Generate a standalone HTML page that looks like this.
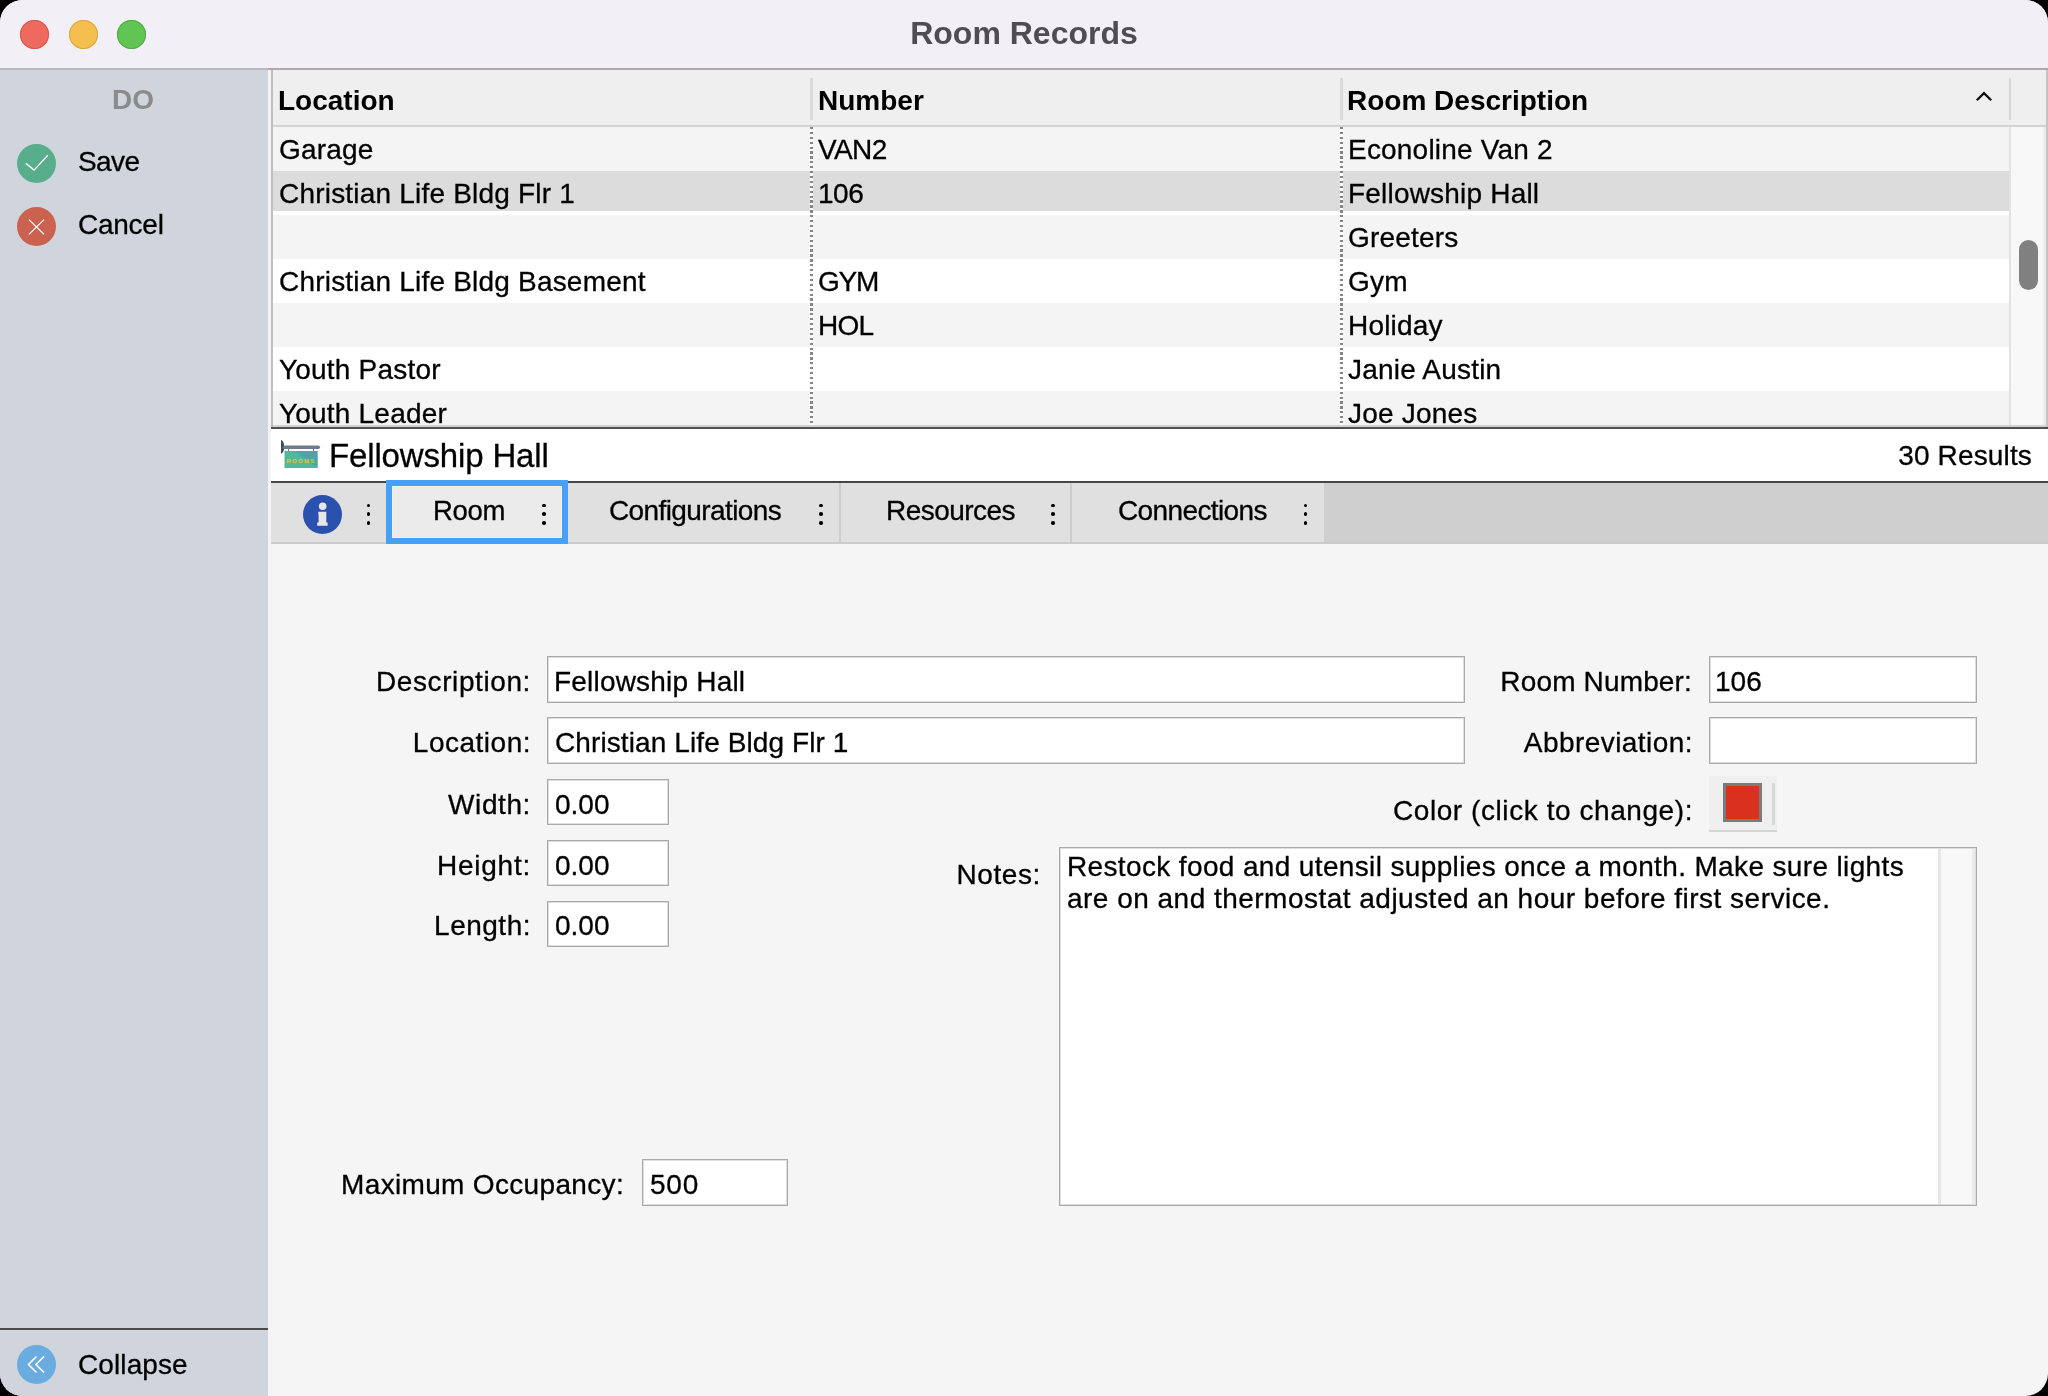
<!DOCTYPE html>
<html><head><meta charset="utf-8"><title>Room Records</title>
<style>
html,body{margin:0;padding:0;background:#000;}
body{width:2048px;height:1396px;overflow:hidden;position:relative;font-family:"Liberation Sans",sans-serif;}
#win{position:absolute;left:0;top:0;width:2048px;height:1396px;border-radius:22.5px;overflow:hidden;background:#f5f5f5;}
.t{position:absolute;white-space:pre;color:#000;will-change:transform;-webkit-text-stroke:0.3px currentColor;}
.b{-webkit-text-stroke:0;}
.r{position:absolute;}
</style></head><body><div id="win">

<div class="r" style="left:0px;top:0px;width:2048px;height:68px;background:#f2f0f6;"></div>
<div class="r" style="left:0px;top:68px;width:268px;height:2px;background:#b4b9c2;"></div>
<div class="r" style="left:268px;top:68px;width:1780px;height:2px;background:#aaaaaa;"></div>
<div class="r" style="left:19.5px;top:19.5px;width:29px;height:29px;border-radius:50%;background:#ee6a5e;box-shadow:inset 0 0 0 1px #d6574c;"></div>
<div class="r" style="left:68.5px;top:19.5px;width:29px;height:29px;border-radius:50%;background:#f4bf4f;box-shadow:inset 0 0 0 1px #dba53c;"></div>
<div class="r" style="left:117.1px;top:19.5px;width:29px;height:29px;border-radius:50%;background:#61c554;box-shadow:inset 0 0 0 1px #50a844;"></div>
<div class="t b" style="left:524px;width:1000px;text-align:center;top:16.91px;font-size:32px;line-height:32px;font-weight:700;color:#4e4e52;">Room Records</div>
<div class="r" style="left:0px;top:70px;width:268px;height:1326px;background:#cfd4dd;"></div>
<div class="r" style="left:268px;top:70px;width:3px;height:1326px;background:#f4f4f4;"></div>
<div class="t b" style="left:-367px;width:1000px;text-align:center;top:85.80px;font-size:28px;line-height:28px;font-weight:700;color:#8b8b8b;">DO</div>
<svg class="r" style="left:17px;top:144px" width="39" height="39" viewBox="0 0 39 39"><circle cx="19.5" cy="19.5" r="19.5" fill="#58ad8b"/><path d="M8.8 19.4 L17.1 26.1 L30.8 11.3" fill="none" stroke="#fff" stroke-width="1.35"/></svg>
<div class="t" style="left:77.8px;top:147.60px;font-size:28px;line-height:28px;letter-spacing:-0.6px;">Save</div>
<svg class="r" style="left:17px;top:207px" width="39" height="39" viewBox="0 0 39 39"><circle cx="19.5" cy="19.5" r="19.5" fill="#cb6250"/><path d="M11.9 12.6 L27.1 27.4 M27.1 12.6 L11.9 27.4" fill="none" stroke="#fff" stroke-width="1.3"/></svg>
<div class="t" style="left:78.2px;top:210.80px;font-size:28px;line-height:28px;letter-spacing:-0.25px;">Cancel</div>
<div class="r" style="left:0px;top:1328px;width:268px;height:2px;background:#4a4a4a;"></div>
<svg class="r" style="left:17px;top:1345px" width="39" height="39" viewBox="0 0 39 39"><circle cx="19.5" cy="19.5" r="19.5" fill="#6aacdf"/><path d="M19.5 11.5 L11.5 19.5 L19.5 27.5 M27 11.5 L19 19.5 L27 27.5" fill="none" stroke="#fff" stroke-width="1.6"/></svg>
<div class="t" style="left:78px;top:1350.80px;font-size:28px;line-height:28px;letter-spacing:0.1px;">Collapse</div>
<div class="r" style="left:271px;top:70px;width:1777px;height:359px;background:#ffffff;"></div>
<div class="r" style="left:271px;top:70px;width:2px;height:359px;background:#c0c0c0;"></div>
<div class="r" style="left:273px;top:70px;width:1772.5px;height:55px;background:#efefef;"></div>
<div class="r" style="left:273px;top:125px;width:1772.5px;height:2px;background:#d3d3d3;"></div>
<div class="r" style="left:2045.5px;top:70px;width:2.5px;height:359px;background:#c4c4c4;"></div>
<div class="r" style="left:810px;top:78px;width:3px;height:42px;background:#dadada;"></div>
<div class="r" style="left:1340px;top:78px;width:3px;height:42px;background:#dadada;"></div>
<div class="r" style="left:2009px;top:78px;width:2px;height:42px;background:#d6d6d6;"></div>
<div class="t b" style="left:278px;top:86.60px;font-size:28px;line-height:28px;font-weight:700;">Location</div>
<div class="t b" style="left:817.5px;top:86.60px;font-size:28px;line-height:28px;font-weight:700;">Number</div>
<div class="t b" style="left:1346.5px;top:86.60px;font-size:28px;line-height:28px;font-weight:700;">Room Description</div>
<svg class="r" style="left:1975px;top:90px" width="18" height="12" viewBox="0 0 18 12"><path d="M1.8 10.3 L9 3.2 L16.2 10.3" fill="none" stroke="#111" stroke-width="2.3"/></svg>
<div class="r" style="left:273px;top:127px;width:1736px;height:44px;background:#f3f4f3;"></div>
<div class="t" style="left:278.5px;top:136.00px;font-size:28px;line-height:28px;letter-spacing:0.2px;">Garage</div>
<div class="t" style="left:817.5px;top:136.00px;font-size:28px;line-height:28px;letter-spacing:-0.6px;">VAN2</div>
<div class="t" style="left:1347.5px;top:136.00px;font-size:28px;line-height:28px;letter-spacing:0.2px;">Econoline Van 2</div>
<div class="r" style="left:273px;top:171px;width:1736px;height:44px;background:#ffffff;"></div>
<div class="r" style="left:273px;top:171px;width:1736px;height:40px;background:#dcdcdc;"></div>
<div class="t" style="left:278.5px;top:180.00px;font-size:28px;line-height:28px;letter-spacing:0.2px;">Christian Life Bldg Flr 1</div>
<div class="t" style="left:817.5px;top:180.00px;font-size:28px;line-height:28px;letter-spacing:-0.5px;">106</div>
<div class="t" style="left:1347.5px;top:180.00px;font-size:28px;line-height:28px;letter-spacing:0.2px;">Fellowship Hall</div>
<div class="r" style="left:273px;top:215px;width:1736px;height:44px;background:#f3f4f3;"></div>
<div class="t" style="left:278.5px;top:224.00px;font-size:28px;line-height:28px;letter-spacing:0.2px;"></div>
<div class="t" style="left:817.5px;top:224.00px;font-size:28px;line-height:28px;"></div>
<div class="t" style="left:1347.5px;top:224.00px;font-size:28px;line-height:28px;letter-spacing:0.2px;">Greeters</div>
<div class="r" style="left:273px;top:259px;width:1736px;height:44px;background:#ffffff;"></div>
<div class="t" style="left:278.5px;top:268.00px;font-size:28px;line-height:28px;letter-spacing:0.2px;">Christian Life Bldg Basement</div>
<div class="t" style="left:817.5px;top:268.00px;font-size:28px;line-height:28px;letter-spacing:-1.2px;">GYM</div>
<div class="t" style="left:1347.5px;top:268.00px;font-size:28px;line-height:28px;letter-spacing:0.2px;">Gym</div>
<div class="r" style="left:273px;top:303px;width:1736px;height:44px;background:#f3f4f3;"></div>
<div class="t" style="left:278.5px;top:312.00px;font-size:28px;line-height:28px;letter-spacing:0.2px;"></div>
<div class="t" style="left:817.5px;top:312.00px;font-size:28px;line-height:28px;letter-spacing:-0.7px;">HOL</div>
<div class="t" style="left:1347.5px;top:312.00px;font-size:28px;line-height:28px;letter-spacing:0.2px;">Holiday</div>
<div class="r" style="left:273px;top:347px;width:1736px;height:44px;background:#ffffff;"></div>
<div class="t" style="left:278.5px;top:356.00px;font-size:28px;line-height:28px;letter-spacing:0.2px;">Youth Pastor</div>
<div class="t" style="left:817.5px;top:356.00px;font-size:28px;line-height:28px;"></div>
<div class="t" style="left:1347.5px;top:356.00px;font-size:28px;line-height:28px;letter-spacing:0.2px;">Janie Austin</div>
<div class="r" style="left:273px;top:391px;width:1736px;height:36px;background:#f3f4f3;"></div>
<div class="t" style="left:278.5px;top:400.00px;font-size:28px;line-height:28px;letter-spacing:0.2px;">Youth Leader</div>
<div class="t" style="left:817.5px;top:400.00px;font-size:28px;line-height:28px;"></div>
<div class="t" style="left:1347.5px;top:400.00px;font-size:28px;line-height:28px;letter-spacing:0.2px;">Joe Jones</div>
<div class="r" style="left:810px;top:127px;width:3px;height:298px;background:repeating-linear-gradient(#858585 0 2.2px,#ffffff 2.2px 4.9px);"></div>
<div class="r" style="left:1340px;top:127px;width:3px;height:298px;background:repeating-linear-gradient(#858585 0 2.2px,#ffffff 2.2px 4.9px);"></div>
<div class="r" style="left:2009px;top:127px;width:2px;height:300px;background:#e2e2e2;"></div>
<div class="r" style="left:2011px;top:127px;width:32px;height:300px;background:#f8f8f8;"></div>
<div class="r" style="left:2043px;top:127px;width:2.5px;height:300px;background:#ececec;"></div>
<div class="r" style="left:2019px;top:240px;width:19px;height:50px;border-radius:9.5px;background:#808080"></div>
<div class="r" style="left:273px;top:425px;width:1772.5px;height:2px;background:#d2d2d2;"></div>
<div class="r" style="left:271px;top:427px;width:1777px;height:2.3000000000000114px;background:#505050;"></div>
<div class="r" style="left:271px;top:429px;width:1777px;height:52px;background:#ffffff;"></div>
<svg class="r" style="left:280px;top:439px" width="41" height="31" viewBox="0 0 41 31">
<path d="M1 0.7 Q4 2.5 4 6 L4 10.5 Q4 13 1 14.7 Z" fill="#3f4d58"/>
<rect x="3" y="6.5" width="37" height="3.5" rx="1.7" fill="#6b7d8a"/>
<rect x="8" y="10" width="1" height="3" fill="#6b7d8a"/><rect x="33" y="10" width="1" height="3" fill="#6b7d8a"/>
<rect x="4.5" y="12" width="33" height="17" fill="#52b89c"/>
<path d="M14 12 L37.5 12 L37.5 29 Z" fill="#4aa7a8"/>
<text x="21" y="23.6" font-family="Liberation Sans" font-size="6" font-weight="700" fill="#e3c53a" text-anchor="middle" letter-spacing="1.3">ROOMS</text>
</svg>
<div class="t" style="left:328.5px;top:438.57px;font-size:33px;line-height:33px;letter-spacing:-0.15px;">Fellowship Hall</div>
<div class="t" style="left:1031.5px;width:1000px;text-align:right;top:442.30px;font-size:28px;line-height:28px;letter-spacing:0.15px;">30 Results</div>
<div class="r" style="left:271px;top:481px;width:1777px;height:2px;background:#474747;"></div>
<div class="r" style="left:271px;top:483px;width:1777px;height:61px;background:#cfcfcf;"></div>
<div class="r" style="left:271px;top:483px;width:1053px;height:59px;background:#e0e0e0;"></div>
<div class="r" style="left:271px;top:542px;width:1777px;height:2px;background:#cbcbcb;"></div>
<div class="r" style="left:839px;top:483px;width:2px;height:59px;background:#cdcdcd;"></div>
<div class="r" style="left:1070px;top:483px;width:2px;height:59px;background:#cdcdcd;"></div>
<svg class="r" style="left:302.5px;top:495px" width="39" height="39" viewBox="0 0 39 39"><circle cx="19.5" cy="19.5" r="19.5" fill="#2a51ae"/>
<circle cx="19.7" cy="11.3" r="3.8" fill="#e8e8e8"/>
<path d="M15.3 16.8 L23.3 16.8 L23.3 27.5 L24.6 27.5 L24.6 30.8 L14.2 30.8 L14.2 27.5 L15.6 27.5 L15.6 19.6 L15.3 19.6 Z" fill="#e8e8e8"/></svg>
<div class="r" style="left:366.5px;top:503.5px;width:3.6px;height:3.6px;border-radius:50%;background:#000"></div>
<div class="r" style="left:366.5px;top:512.4000000000001px;width:3.6px;height:3.6px;border-radius:50%;background:#000"></div>
<div class="r" style="left:366.5px;top:521.4000000000001px;width:3.6px;height:3.6px;border-radius:50%;background:#000"></div>
<div class="r" style="left:386px;top:480px;width:170px;height:52px;border:6px solid #47a0f8;background:#ebebeb;box-shadow:inset 0 0 0 1px #f6efe6;"></div>
<div class="t" style="left:433px;top:497.02px;font-size:27.5px;line-height:27.5px;letter-spacing:-0.3px;">Room</div>
<div class="r" style="left:542.2px;top:503.5px;width:3.6px;height:3.6px;border-radius:50%;background:#000"></div>
<div class="r" style="left:542.2px;top:512.4000000000001px;width:3.6px;height:3.6px;border-radius:50%;background:#000"></div>
<div class="r" style="left:542.2px;top:521.4000000000001px;width:3.6px;height:3.6px;border-radius:50%;background:#000"></div>
<div class="t" style="left:608.5px;top:496.60px;font-size:28px;line-height:28px;letter-spacing:-0.6px;">Configurations</div>
<div class="r" style="left:819.2px;top:503.5px;width:3.6px;height:3.6px;border-radius:50%;background:#000"></div>
<div class="r" style="left:819.2px;top:512.4000000000001px;width:3.6px;height:3.6px;border-radius:50%;background:#000"></div>
<div class="r" style="left:819.2px;top:521.4000000000001px;width:3.6px;height:3.6px;border-radius:50%;background:#000"></div>
<div class="t" style="left:885.5px;top:496.60px;font-size:28px;line-height:28px;letter-spacing:-0.55px;">Resources</div>
<div class="r" style="left:1051.0px;top:503.5px;width:3.6px;height:3.6px;border-radius:50%;background:#000"></div>
<div class="r" style="left:1051.0px;top:512.4000000000001px;width:3.6px;height:3.6px;border-radius:50%;background:#000"></div>
<div class="r" style="left:1051.0px;top:521.4000000000001px;width:3.6px;height:3.6px;border-radius:50%;background:#000"></div>
<div class="t" style="left:1117.5px;top:496.60px;font-size:28px;line-height:28px;letter-spacing:-0.62px;">Connections</div>
<div class="r" style="left:1303.5px;top:503.5px;width:3.6px;height:3.6px;border-radius:50%;background:#000"></div>
<div class="r" style="left:1303.5px;top:512.4000000000001px;width:3.6px;height:3.6px;border-radius:50%;background:#000"></div>
<div class="r" style="left:1303.5px;top:521.4000000000001px;width:3.6px;height:3.6px;border-radius:50%;background:#000"></div>
<div class="t" style="left:-469.5px;width:1000px;text-align:right;top:668.10px;font-size:28px;line-height:28px;letter-spacing:0.6px;">Description:</div>
<div class="r" style="left:547px;top:656px;width:916px;height:45px;border:1px solid #a9a9a9;background:#fff;box-shadow:inset 0 0 0 1px #dedede"></div>
<div class="t" style="left:554px;top:667.90px;font-size:28px;line-height:28px;letter-spacing:0.2px;">Fellowship Hall</div>
<div class="t" style="left:-469.5px;width:1000px;text-align:right;top:728.90px;font-size:28px;line-height:28px;letter-spacing:0.5px;">Location:</div>
<div class="r" style="left:547px;top:717px;width:916px;height:45px;border:1px solid #a9a9a9;background:#fff;box-shadow:inset 0 0 0 1px #dedede"></div>
<div class="t" style="left:554.5px;top:728.90px;font-size:28px;line-height:28px;letter-spacing:0.1px;">Christian Life Bldg Flr 1</div>
<div class="t" style="left:-469.4px;width:1000px;text-align:right;top:790.50px;font-size:28px;line-height:28px;letter-spacing:0.6px;">Width:</div>
<div class="r" style="left:547px;top:779px;width:120px;height:44px;border:1px solid #a9a9a9;background:#fff;box-shadow:inset 0 0 0 1px #dedede"></div>
<div class="t" style="left:554.5px;top:790.50px;font-size:28px;line-height:28px;">0.00</div>
<div class="t" style="left:-469.25px;width:1000px;text-align:right;top:851.50px;font-size:28px;line-height:28px;letter-spacing:0.75px;">Height:</div>
<div class="r" style="left:547px;top:840px;width:120px;height:44px;border:1px solid #a9a9a9;background:#fff;box-shadow:inset 0 0 0 1px #dedede"></div>
<div class="t" style="left:554.5px;top:851.50px;font-size:28px;line-height:28px;">0.00</div>
<div class="t" style="left:-469.5px;width:1000px;text-align:right;top:912.00px;font-size:28px;line-height:28px;letter-spacing:0.5px;">Length:</div>
<div class="r" style="left:547px;top:900.5px;width:120px;height:44.0px;border:1px solid #a9a9a9;background:#fff;box-shadow:inset 0 0 0 1px #dedede"></div>
<div class="t" style="left:554.5px;top:912.00px;font-size:28px;line-height:28px;">0.00</div>
<div class="t" style="left:692.2px;width:1000px;text-align:right;top:668.10px;font-size:28px;line-height:28px;letter-spacing:0.15px;">Room Number:</div>
<div class="r" style="left:1709px;top:656px;width:266px;height:45px;border:1px solid #a9a9a9;background:#fff;box-shadow:inset 0 0 0 1px #dedede"></div>
<div class="t" style="left:1715px;top:668.10px;font-size:28px;line-height:28px;">106</div>
<div class="t" style="left:692.5px;width:1000px;text-align:right;top:728.60px;font-size:28px;line-height:28px;letter-spacing:0.44px;">Abbreviation:</div>
<div class="r" style="left:1709px;top:717px;width:266px;height:45px;border:1px solid #a9a9a9;background:#fff;box-shadow:inset 0 0 0 1px #dedede"></div>
<div class="t" style="left:692.5px;width:1000px;text-align:right;top:797.10px;font-size:28px;line-height:28px;letter-spacing:0.57px;">Color (click to change):</div>
<div class="r" style="left:1709px;top:776px;width:68px;height:54px;background:#efefef;"></div>
<div class="r" style="left:1709px;top:830px;width:68px;height:2px;background:#d4d4d4;"></div>
<div class="r" style="left:1772.2px;top:783px;width:2.7999999999999545px;height:42px;background:#d8d8d8;"></div>
<div class="r" style="left:1723px;top:783px;width:33px;height:33px;border:3px solid #7b7b7b;background:#d93020"></div>
<div class="t" style="left:40.5px;width:1000px;text-align:right;top:860.60px;font-size:28px;line-height:28px;letter-spacing:0.6px;">Notes:</div>
<div class="r" style="left:1059px;top:847px;width:916px;height:357px;border:1px solid #a9a9a9;background:#fff;box-shadow:inset 0 0 0 1px #dedede"></div>
<div class="r" style="left:1938px;top:849px;width:3px;height:355px;background:#e6e6e6;"></div>
<div class="r" style="left:1941px;top:849px;width:31px;height:355px;background:#f8f8f8;"></div>
<div class="r" style="left:1972px;top:849px;width:3px;height:355px;background:#ebebeb;"></div>
<div class="t" style="left:1067px;top:853.10px;font-size:28px;line-height:28px;letter-spacing:0.36px;">Restock food and utensil supplies once a month. Make sure lights</div>
<div class="t" style="left:1067px;top:885.20px;font-size:28px;line-height:28px;letter-spacing:0.48px;">are on and thermostat adjusted an hour before first service.</div>
<div class="t" style="left:-375.79999999999995px;width:1000px;text-align:right;top:1170.90px;font-size:28px;line-height:28px;letter-spacing:0.33px;">Maximum Occupancy:</div>
<div class="r" style="left:642px;top:1159px;width:144px;height:45px;border:1px solid #a9a9a9;background:#fff;box-shadow:inset 0 0 0 1px #dedede"></div>
<div class="t" style="left:650px;top:1170.90px;font-size:28px;line-height:28px;letter-spacing:0.8px;">500</div>
</div></body></html>
